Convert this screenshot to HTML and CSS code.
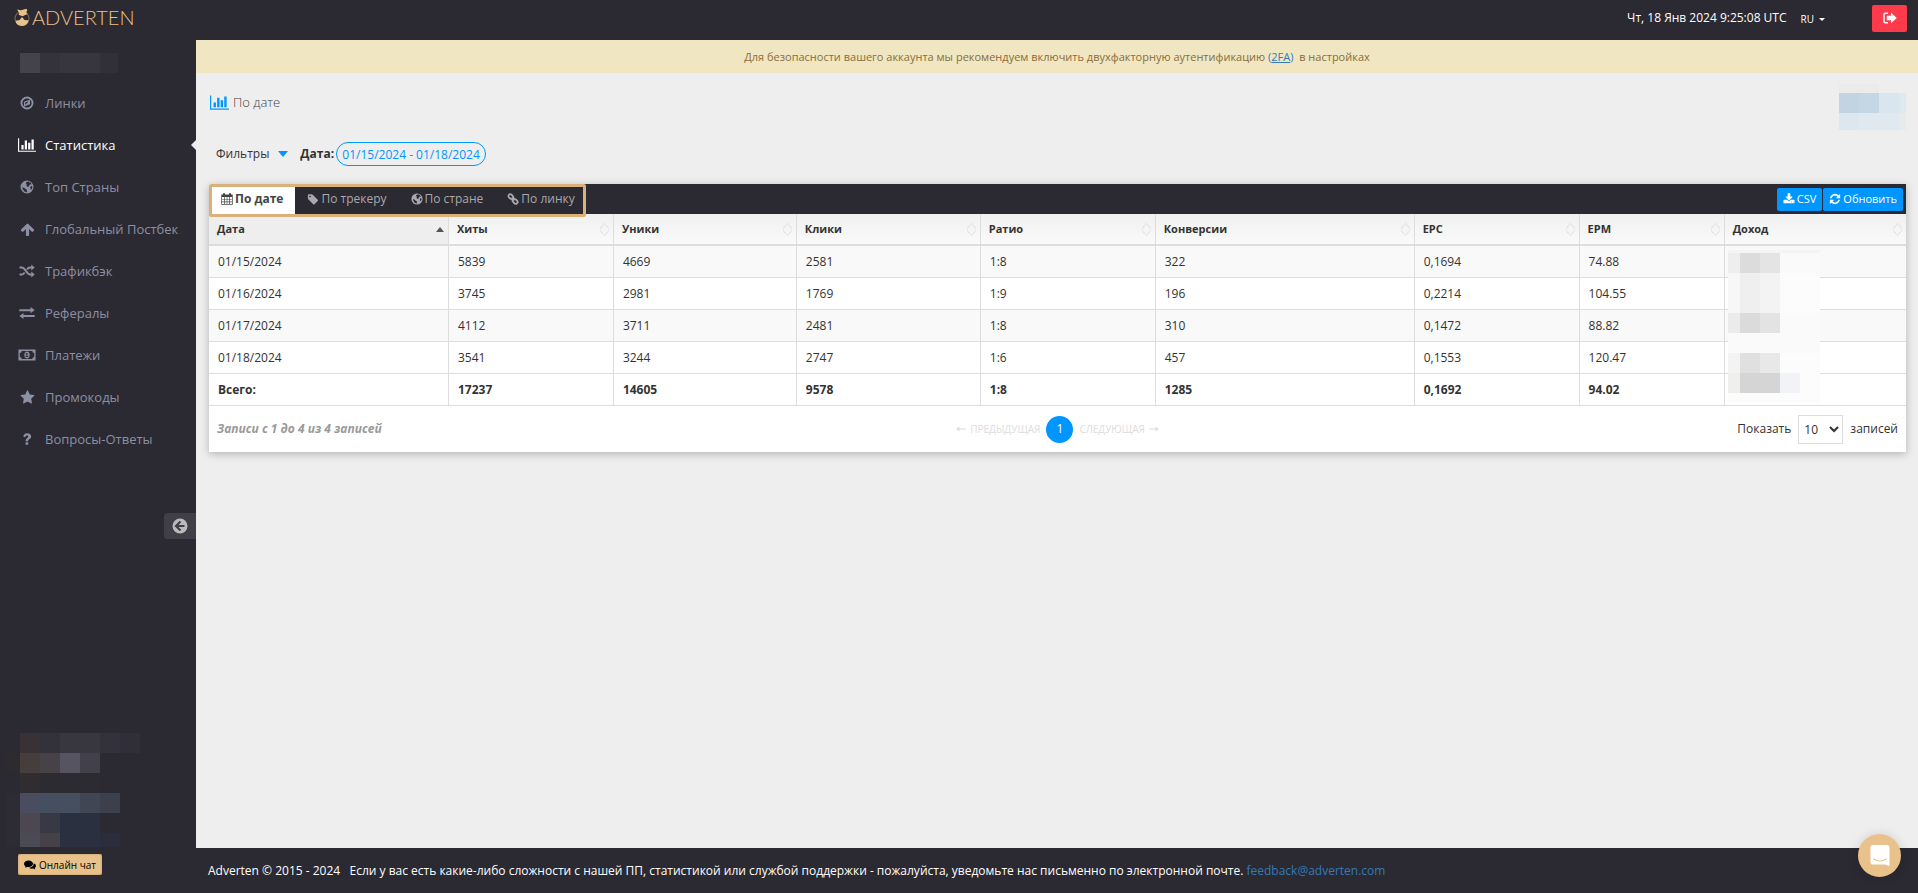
FILE: index.html
```html
<!DOCTYPE html>
<html lang="ru">
<head>
<meta charset="utf-8">
<title>Adverten — Статистика по дате</title>
<meta name="viewport" content="width=device-width, initial-scale=1">
<link rel="stylesheet" href="styles.css">
</head>
<body>
<svg class="defs" aria-hidden="true">
  <symbol id="i-chart" viewBox="0 0 2048 1792"><path d="M640 896v512h-256v-512h256zm384-512v1024h-256v-1024h256zm1024 1152v128h-2048v-1536h128v1408h1920zm-640-896v768h-256v-768h256zm384-384v1152h-256v-1152h256z"/></symbol>
  <symbol id="i-compass" viewBox="0 0 14 14"><path fill-rule="evenodd" d="M7 .5a6.500 6.500 0 1 0 0 13a6.500 6.500 0 0 0 0-13zm0 1.900a4.600 4.600 0 1 1 0 9.200a4.600 4.600 0 0 1 0-9.200zM10 3.400v4.900L4 10.600V5.700zM8.800 5.200L5.200 6.600v2.200zM7 6.100z"/></symbol>
  <symbol id="i-globe" viewBox="0 0 14 14"><path fill-rule="evenodd" d="M7 .5a6.500 6.500 0 1 0 0 13a6.500 6.500 0 0 0 0-13zM6.300 2.200l2.200-.6 2.300 1.300.9 1.500-1.300-.2-1.200 1-.3 1.300-1.500.3-1-1.100.4-1.500-1-.8zM11.400 6l.9.400-.1 1.600-1 1.700-.9-1.200.1-1.700zM2.300 7.200l1.800.5 1.700 1.500 1.200.5-.4 1.300.8 1.200C5 12.300 2.800 10.500 2.300 7.200z"/></symbol>
  <symbol id="i-up" viewBox="0 0 1792 1792"><path d="M1675 971q0 51-37 90l-75 75q-38 38-91 38-54 0-90-38l-294-293v704q0 52-37.500 84.500t-90.500 32.500h-128q-53 0-90.500-32.500t-37.500-84.500v-704l-294 293q-36 38-90 38t-90-38l-75-75q-38-38-38-90 0-53 38-91l651-651q35-37 90-37 54 0 91 37l651 651q37 39 37 91z"/></symbol>
  <symbol id="i-random" viewBox="0 0 16 14"><path fill="none" stroke="currentColor" stroke-width="2" d="M.5 3.500h2.300c3.700 0 4.700 7 8.200 7h2M.5 10.500h2.300c1.400 0 2.200-.9 2.900-2M8 5.500c.8-1.200 1.700-2 3-2h2"/><path d="M12.300 .5v6l3.400-3zM12.300 7.500v6l3.400-3z"/></symbol>
  <symbol id="i-exchange" viewBox="0 0 16 14"><path d="M.3 3.200h11.200V1l4.200 3.100-4.200 3.100V5.200H.3zM15.700 11H4.500v2L.3 10l4.200-3v2h11.200z"/></symbol>
  <symbol id="i-money" viewBox="0 0 18 14"><path fill-rule="evenodd" d="M.5 1.500h17v11H.500zM3.700 3a2 2 0 0 1-1.900 1.900v4.200A2 2 0 0 1 3.700 11h10.600a2 2 0 0 1 1.900-1.900V4.900A2 2 0 0 1 14.300 3zM9 3.500c1.600 0 2.700 1.600 2.700 3.500S10.600 10.500 9 10.500 6.300 8.900 6.300 7 7.400 3.500 9 3.500zM8.500 5l-1.100 1 .5.600.5-.4v2h-.8v.9h2.600v-.9h-.7V5z"/></symbol>
  <symbol id="i-star" viewBox="0 0 1792 1792"><path d="M1728 647q0 22-26 48l-363 354 86 500q1 7 1 20 0 21-10.500 35.500t-30.500 14.500q-19 0-40-12l-449-236-449 236q-22 12-40 12-21 0-31.500-14.500t-10.500-35.500q0-6 2-20l86-500-364-354q-25-27-25-48 0-37 56-46l502-73 225-455q19-41 49-41t49 41l225 455 502 73q56 9 56 46z"/></symbol>
  <symbol id="i-question" viewBox="0 0 14 14"><path d="M5.600 10.200h2.600v2.500H5.600zM3.200 4.200C3.900 2.300 5.200 1.300 7.200 1.300c2.300 0 4 1.400 4 3.300 0 2.500-3 2.800-3 4.200v.4H5.600v-.8C5.600 6.300 8.200 6 8.200 4.700c0-.7-.6-1.100-1.300-1.100-.8 0-1.200.5-1.800 1.900z"/></symbol>
  <symbol id="i-tag" viewBox="0 0 1792 1792"><path d="M576 448q0-53-37.500-90.500t-90.500-37.500-90.500 37.500-37.500 90.500 37.500 90.500 90.500 37.500 90.500-37.500 37.500-90.500zm1067 576q0 53-37 90l-491 492q-39 37-91 37-53 0-90-37l-715-716q-38-37-64.500-101t-26.500-117v-416q0-52 38-90t90-38h416q53 0 117 26.500t102 64.500l715 714q37 39 37 91z"/></symbol>
  <symbol id="i-calendar" viewBox="0 0 12 12"><path fill-rule="evenodd" d="M.3 1.500H2V.2h2v1.300h4V.2h2v1.300h1.700v10.300H.3zM1 4v2h2V4zm2.700 0v2h2V4zm2.600 0v2h2V4zM9 4v2h2V4zM1 6.600v2h2v-2zm2.700 0v2h2v-2zm2.600 0v2h2v-2zm2.700 0v2h2v-2zM1 9.200v1.900h2V9.200zm2.700 0v1.900h2V9.200zm2.600 0v1.900h2V9.200zm2.700 0v1.900h2V9.200z"/></symbol>
  <symbol id="i-link" viewBox="0 0 12 12"><g fill="none" stroke="currentColor" stroke-width="1.800"><rect x="1.200" y="1.900" width="5.400" height="3.600" rx="1.700" transform="rotate(45 3.900 3.700)"/><rect x="5.400" y="6.500" width="5.400" height="3.600" rx="1.700" transform="rotate(45 8.100 8.300)"/><path d="M4.600 4.600l2.800 2.800"/></g></symbol>
  <symbol id="i-download" viewBox="0 0 1792 1792"><path d="M1344 1344q0-26-19-45t-45-19-45 19-19 45 19 45 45 19 45-19 19-45zm256 0q0-26-19-45t-45-19-45 19-19 45 19 45 45 19 45-19 19-45zm128-224v320q0 40-28 68t-68 28h-1472q-40 0-68-28t-28-68v-320q0-40 28-68t68-28h465l135 136q58 56 136 56t136-56l136-136h464q40 0 68 28t28 68zm-325-569q17 41-14 70l-448 448q-18 19-45 19t-45-19l-448-448q-31-29-14-70 17-39 59-39h256v-448q0-26 19-45t45-19h256q26 0 45 19t19 45v448h256q42 0 59 39z"/></symbol>
  <symbol id="i-refresh" viewBox="0 0 1792 1792"><path d="M1639 1056q0 5-1 7-64 268-268 434.500t-478 166.500q-146 0-282.500-55t-243.500-157l-129 129q-19 19-45 19t-45-19-19-45v-448q0-26 19-45t45-19h448q26 0 45 19t19 45-19 45l-137 137q71 66 161 102t187 36q134 0 250-65t186-179q11-17 53-117 8-23 30-23h192q13 0 22.500 9.500t9.500 22.500zm25-800v448q0 26-19 45t-45 19h-448q-26 0-45-19t-19-45 19-45l138-138q-148-137-349-137-134 0-250 65t-186 179q-11 17-53 117-8 23-30 23h-199q-13 0-22.500-9.500t-9.500-22.500v-7q65-268 270-434.500t480-166.500q146 0 284 55.500t245 156.500l130-129q19-19 45-19t45 19 19 45z"/></symbol>
  <symbol id="i-sort" viewBox="0 0 9 13"><path fill="none" stroke="#ccc" stroke-dasharray="1.200 .8" d="M.5 5.500v-.5l4-4.300 4 4.300v.5M.5 7.500v.5l4 4.300 4-4.300v-.5"/></symbol>
  <symbol id="i-arrow" viewBox="0 0 10 6"><path d="M0 2.400h6.500V.5L10 3 6.500 5.500V3.600H0z"/></symbol>
</svg>

<header class="topbar">
  <a class="logo" href="#" aria-label="Adverten">
    <svg width="18" height="19" viewBox="0 0 18 19"><circle cx="9" cy="10.500" r="7" fill="none" stroke="#7a654e" stroke-width="1.200"/><path fill="#e9c28b" d="M4 1.500l4 .8L13.500.8l.8 1.400-1 2 1.200 1.800L9.500 8.300 5.500 6.800l.9-1.600zM9 9l2.500 3 3.800.3c0 3.200-2.600 5.700-6.300 5.700s-6.300-2.400-6.300-5.200l3.900-.8z"/></svg>
    <span class="logo-text">ADVERTEN</span>
  </a>
  <div class="topbar-right">
    <time class="clock">Чт, 18 Янв 2024 9:25:08 UTC</time>
    <button class="lang" type="button">RU <span class="caret"></span></button>
    <button class="logout" type="button" aria-label="Выход">
      <svg width="14" height="12" viewBox="0 0 14 12"><path fill="none" stroke="#fff" stroke-width="1.500" d="M5 1.300H2.500Q1 1.300 1 2.800v6.400q0 1.500 1.500 1.500H5"/><path fill="#fff" d="M3.800 3.700H8V.8L13.800 6 8 11.200V8.300H3.800z"/></svg>
    </button>
  </div>
</header>

<div class="shell">
  <aside class="sidebar">
    <svg class="user-mask" width="98" height="20" shape-rendering="crispEdges" aria-hidden="true"><path fill="#44424b" d="M0 0h20v20H0z"/><path fill="#34323b" d="M20 0h20v20H20z"/><path fill="#37353e" d="M40 0h40v20H40z"/><path fill="#312f38" d="M80 0h18v20H80z"/></svg>
    <nav class="menu">
      <a class="menu-item" href="#"><svg class="menu-icon" width="14" height="14"><use href="#i-compass"/></svg>Линки</a>
      <a class="menu-item is-active" href="#"><svg class="menu-icon" width="18" height="16"><use href="#i-chart"/></svg>Статистика</a>
      <a class="menu-item" href="#"><svg class="menu-icon" width="14" height="14"><use href="#i-globe"/></svg>Топ Страны</a>
      <a class="menu-item" href="#"><svg class="menu-icon" width="15" height="15"><use href="#i-up"/></svg>Глобальный Постбек</a>
      <a class="menu-item" href="#"><svg class="menu-icon" width="16" height="14"><use href="#i-random"/></svg>Трафикбэк</a>
      <a class="menu-item" href="#"><svg class="menu-icon" width="16" height="14"><use href="#i-exchange"/></svg>Рефералы</a>
      <a class="menu-item" href="#"><svg class="menu-icon" width="18" height="14"><use href="#i-money"/></svg>Платежи</a>
      <a class="menu-item" href="#"><svg class="menu-icon" width="15" height="15"><use href="#i-star"/></svg>Промокоды</a>
      <a class="menu-item" href="#"><svg class="menu-icon" width="14" height="14"><use href="#i-question"/></svg>Вопросы-Ответы</a>
    </nav>
    <button class="collapse" type="button" aria-label="Свернуть меню">
      <svg width="16" height="16" viewBox="0 0 16 16"><circle cx="8" cy="8" r="7.500" fill="#bbb"/><path fill="none" stroke="#403e47" stroke-width="2.200" d="M8.500 3.500L4 8l4.500 4.500M4 8h8.500"/></svg>
    </button>
    <svg class="manager-mask" width="134" height="114" shape-rendering="crispEdges" aria-hidden="true">
      <path fill="#393135" d="M14 0h20v20H14z"/><path fill="#33313a" d="M34 0h20v20H34z"/><path fill="#38363f" d="M54 0h40v20H54z"/><path fill="#33313b" d="M94 0h20v20H94z"/><path fill="#302e38" d="M114 0h20v20h-20z"/>
      <path fill="#2e2b30" d="M0 20h14v20H0z"/><path fill="#463e3d" d="M14 20h20v20H14z"/><path fill="#474148" d="M34 20h20v20H34z"/><path fill="#565460" d="M54 20h20v20H54z"/><path fill="#42404b" d="M74 20h20v20H74z"/>
      <path fill="#302d31" d="M14 40h20v20H14z"/><path fill="#2d2b32" d="M34 40h60v20H34z"/>
      <path fill="#2d2b34" d="M0 60h14v54H0z"/><path fill="#4a4c5f" d="M14 60h20v20H14z"/><path fill="#454f5f" d="M34 60h40v20H34z"/><path fill="#404653" d="M74 60h20v20H74z"/><path fill="#3c404c" d="M94 60h20v20H94z"/>
      <path fill="#4c4750" d="M14 80h20v20H14z"/><path fill="#373944" d="M34 80h20v20H34z"/><path fill="#2b3040" d="M54 80h40v34H54z"/>
      <path fill="#4b4b55" d="M14 100h20v14H14z"/><path fill="#464148" d="M34 100h20v14H34z"/><path fill="#2b2d3c" d="M94 100h20v14H94z"/>
    </svg>
    <button class="chat" type="button">
      <svg width="12" height="10" viewBox="0 0 12 10"><path d="M4.500.5C2 .5 0 1.900 0 3.800c0 1 .6 1.900 1.500 2.500L1 7.800l2-.9c3 .7 6-.9 6-3.100C9 1.900 7 .5 4.500.5z"/><path d="M9.600 3.300C10 5.600 7.900 7.600 5 7.800c1 .8 2.600 1.200 4.200.8l2 .9-.5-1.400c2-1.400 1.500-4-1.100-4.800z"/></svg>
      Онлайн чат
    </button>
  </aside>

  <div class="page">
    <div class="alert">Для безопасности вашего аккаунта мы рекомендуем включить двухфакторную аутентификацию <a href="#">(<u>2FA</u>)</a> &nbsp;в настройках</div>

    <main class="content">
      <div class="title-row">
        <h1 class="title"><svg width="19" height="17"><use href="#i-chart"/></svg>По дате</h1>
        <svg class="balance-mask" width="67" height="46" shape-rendering="crispEdges" aria-hidden="true"><path fill="#ebebeb" d="M0 0h40v9H0z"/><path fill="#c2d4e2" d="M0 9h20v20H0z"/><path fill="#c5d7e5" d="M20 9h20v20H20z"/><path fill="#d9e5ef" d="M40 9h20v20H40z"/><path fill="#dfe9f0" d="M60 9h7v20h-7z"/><path fill="#dde7f0" d="M0 29h20v17H0z"/><path fill="#e0e8f0" d="M20 29h40v17H20z"/><path fill="#e6ebee" d="M60 29h7v17h-7z"/></svg>
      </div>

      <div class="filters">
        <button class="filter-toggle" type="button">Фильтры <span class="filter-arrow"></span></button>
        <label class="date-label" for="range">Дата:</label>
        <input class="date-range" id="range" type="text" value="01/15/2024 - 01/18/2024">
      </div>

      <section class="card">
        <div class="toolbar">
          <nav class="tabs">
            <a class="tab is-active" href="#"><svg width="12" height="12"><use href="#i-calendar"/></svg>По дате</a>
            <a class="tab" href="#"><svg width="12" height="13"><use href="#i-tag"/></svg>По трекеру</a>
            <a class="tab" href="#"><svg width="12" height="12"><use href="#i-globe"/></svg>По стране</a>
            <a class="tab" href="#"><svg width="12" height="12"><use href="#i-link"/></svg>По линку</a>
          </nav>
          <div class="actions">
            <button class="btn" type="button"><svg width="12" height="12"><use href="#i-download"/></svg>CSV</button>
            <button class="btn" type="button"><svg width="12" height="12"><use href="#i-refresh"/></svg>Обновить</button>
          </div>
        </div>

        <div class="table-wrap">
          <table class="stats">
            <colgroup><col class="c-date"><col class="c-hits"><col class="c-uniq"><col class="c-clicks"><col class="c-ratio"><col class="c-conv"><col class="c-epc"><col class="c-epm"><col class="c-income"></colgroup>
            <thead>
              <tr>
                <th class="sorted" scope="col"><div class="th">Дата<span class="sort-up"></span></div></th>
                <th scope="col"><div class="th">Хиты<svg width="9" height="13"><use href="#i-sort"/></svg></div></th>
                <th scope="col"><div class="th">Уники<svg width="9" height="13"><use href="#i-sort"/></svg></div></th>
                <th scope="col"><div class="th">Клики<svg width="9" height="13"><use href="#i-sort"/></svg></div></th>
                <th scope="col"><div class="th">Ратио<svg width="9" height="13"><use href="#i-sort"/></svg></div></th>
                <th scope="col"><div class="th">Конверсии<svg width="9" height="13"><use href="#i-sort"/></svg></div></th>
                <th scope="col"><div class="th">EPC<svg width="9" height="13"><use href="#i-sort"/></svg></div></th>
                <th scope="col"><div class="th">EPM<svg width="9" height="13"><use href="#i-sort"/></svg></div></th>
                <th scope="col"><div class="th">Доход<svg width="9" height="13"><use href="#i-sort"/></svg></div></th>
              </tr>
            </thead>
            <tbody>
              <tr><td>01/15/2024</td><td>5839</td><td>4669</td><td>2581</td><td>1:8</td><td>322</td><td>0,1694</td><td>74.88</td><td></td></tr>
              <tr><td>01/16/2024</td><td>3745</td><td>2981</td><td>1769</td><td>1:9</td><td>196</td><td>0,2214</td><td>104.55</td><td></td></tr>
              <tr><td>01/17/2024</td><td>4112</td><td>3711</td><td>2481</td><td>1:8</td><td>310</td><td>0,1472</td><td>88.82</td><td></td></tr>
              <tr><td>01/18/2024</td><td>3541</td><td>3244</td><td>2747</td><td>1:6</td><td>457</td><td>0,1553</td><td>120.47</td><td></td></tr>
            </tbody>
            <tfoot>
              <tr><td>Всего:</td><td>17237</td><td>14605</td><td>9578</td><td>1:8</td><td>1285</td><td>0,1692</td><td>94.02</td><td></td></tr>
            </tfoot>
          </table>
          <svg class="income-mask" width="92" height="153" shape-rendering="crispEdges" aria-hidden="true">
            <path fill="#fcfcfc" d="M0 0h92v153H0z"/><path fill="#f4f4f4" d="M0 0h92v3H0z"/><path fill="#fafafa" d="M52 3h40v20H52zM52 63h40v20H52zM0 83h92v20H0z"/>
            <path fill="#eee" d="M0 3h12v20H0z"/><path fill="#dcdcdc" d="M12 3h20v20H12z"/><path fill="#e4e4e4" d="M32 3h20v20H32z"/>
            <path fill="#f7f7f7" d="M0 23h12v40H0z"/><path fill="#efefef" d="M12 23h20v40H12z"/><path fill="#f3f3f3" d="M32 23h20v40H32z"/>
            <path fill="#ebebeb" d="M0 63h12v20H0z"/><path fill="#dbdbdb" d="M12 63h20v20H12z"/><path fill="#e3e3e3" d="M32 63h20v20H32z"/>
            <path fill="#f3f3f3" d="M0 103h12v20H0z"/><path fill="#e0e0e0" d="M12 103h20v20H12z"/><path fill="#e8e8e8" d="M32 103h20v20H32z"/>
            <path fill="#efefed" d="M0 123h12v20H0z"/><path fill="#d5d5d5" d="M12 123h40v20H12z"/><path fill="#f2f3f6" d="M52 123h20v20H52z"/>
          </svg>
        </div>

        <div class="table-footer">
          <div class="info">Записи с 1 до 4 из 4 записей</div>
          <nav class="pager">
            <button class="pager-step" type="button" disabled><svg class="flip" width="10" height="6"><use href="#i-arrow"/></svg>Предыдущая</button>
            <button class="pager-page" type="button">1</button>
            <button class="pager-step" type="button" disabled>Следующая<svg width="10" height="6"><use href="#i-arrow"/></svg></button>
          </nav>
          <label class="length">Показать
            <select class="length-select"><option>10</option><option>25</option><option>50</option></select>
            записей</label>
        </div>
      </section>
    </main>

    <footer class="footer">Adverten © 2015 - 2024 &nbsp; Если у вас есть какие-либо сложности с нашей ПП, статистикой или службой поддержки - пожалуйста, уведомьте нас письменно по электронной почте. <a href="#">feedback@adverten.com</a></footer>
  </div>
</div>

<button class="messenger" type="button" aria-label="Открыть чат">
  <svg width="20" height="21" viewBox="0 0 20 21"><path fill="#fff" d="M3 0h14q2.500 0 2.500 2.500V21l-4.500-1.500H3Q.5 19.500.5 17V2.500Q.5 0 3 0z"/><path fill="none" stroke="#e9c28b" stroke-width="1.200" stroke-linecap="round" d="M3.800 14q6.200 4 12.400 0"/></svg>
</button>
</body>
</html>
```

FILE: styles.css
```css
* { box-sizing: border-box; }

body {
  margin: 0;
  min-height: 100vh;
  display: flex;
  flex-direction: column;
  background: #2b2932;
  color: #333;
  font-family: "Open Sans", "Noto Sans", sans-serif;
  font-size: 12px;
  line-height: 18px;
}

svg { fill: currentColor; flex: none; }
button, input, select { font: inherit; color: inherit; }
button { border: 0; padding: 0; background: none; cursor: pointer; }
a { color: #337ab7; text-decoration: none; }

.defs { position: absolute; width: 0; height: 0; }

/* Top bar */
.topbar {
  display: flex;
  justify-content: space-between;
  height: 40px;
  padding: 0 11px 0 13px;
  color: #fff;
}
.logo {
  display: flex;
  gap: 1px;
  align-items: center;
  height: 34px;
  color: #e9c28b;
}
.logo-text { font-family: Lato, sans-serif; font-weight: 300; font-size: 20px; }
.topbar-right { display: flex; align-items: center; height: 36px; }
.lang {
  display: flex;
  align-items: center;
  gap: 5px;
  margin: 2px 47px 0 14px;
  font-size: 10px;
}
.caret { border: 3px solid transparent; border-top-color: #fff; border-bottom: 0; }
.logout {
  display: grid;
  place-items: center;
  width: 35px;
  height: 27px;
  border-radius: 2px;
  background: #ff3b4b;
}

/* Sidebar */
.shell { flex: 1; display: flex; }
.sidebar {
  flex: none;
  width: 196px;
  display: flex;
  flex-direction: column;
  align-items: flex-start;
}
.user-mask { margin: 13px 0 9px 20px; }
.menu { width: 100%; }
.menu-item {
  position: relative;
  display: grid;
  grid-template-columns: 18px 1fr;
  column-gap: 9px;
  align-items: center;
  height: 42px;
  padding-left: 18px;
  color: #8d8fa3;
  font-size: 13px;
}
.menu-icon { justify-self: center; }
.menu-item.is-active { color: #fff; }
.menu-item.is-active::after {
  content: "";
  position: absolute;
  right: 0;
  top: 16px;
  border: 5px solid transparent;
  border-right-color: #e6eef5;
  border-left: 0;
}
.collapse {
  display: grid;
  place-items: center;
  align-self: flex-end;
  width: 32px;
  height: 26px;
  margin-top: 53px;
  border-radius: 4px 0 0 4px;
  background: #403e47;
}
.manager-mask { margin: auto 0 7px 6px; }
.chat {
  display: flex;
  align-items: center;
  gap: 3px;
  height: 21px;
  margin: 0 0 18px 18px;
  padding: 0 6px;
  border-radius: 2px;
  background: #e9c28b;
  box-shadow: inset 0 0 2px #a98a5e;
  color: #000;
  font-size: 10px;
}

/* Page */
.page {
  flex: 1;
  min-width: 0;
  display: flex;
  flex-direction: column;
  background: #eee;
}
.alert {
  padding: 8px 16px 7px;
  background: #f0e6c1;
  color: #8a6d3b;
  font-size: 11px;
  text-align: center;
}
.content { flex: 1; padding: 11px 12px 16px 13px; }
.title-row { display: flex; justify-content: space-between; height: 46px; }
.title {
  display: flex;
  align-items: center;
  gap: 4px;
  margin: 0;
  height: 36px;
  padding-left: 1px;
  color: #444;
  font-size: 13px;
  font-weight: 300;
}
.title svg { color: #0096ff; }
.filters {
  display: flex;
  align-items: center;
  margin: 12px 0 18px 7px;
}
.filter-toggle { display: flex; align-items: center; gap: 9px; }
.filter-arrow { border: 5px solid transparent; border-top: 6px solid #0096ff; border-bottom: 0; }
.date-label { margin: 0 2px 0 12px; font-weight: 700; }
.date-range {
  width: 150px;
  height: 24px;
  padding: 0;
  border: 1px solid #0096ff;
  border-radius: 12px;
  background: transparent;
  color: #0096ff;
  text-align: center;
}

/* Card */
.card { background: #fff; box-shadow: 0 2px 8px rgba(0, 0, 0, .25); }
.toolbar {
  display: flex;
  justify-content: space-between;
  height: 30px;
  background: #2b2932;
}
.tabs { position: relative; z-index: 1; display: flex; }
.tabs::after {
  content: "";
  position: absolute;
  inset: 0 1px -3px 0;
  border: 3px solid #d9b179;
  border-radius: 2px;
  pointer-events: none;
}
.tab {
  display: flex;
  align-items: center;
  gap: 2px;
  padding: 0 12px;
  color: #a9a8ad;
}
.tab.is-active { background: #fff; color: #444; font-weight: 700; }
.actions { display: flex; align-items: center; gap: 1px; padding-right: 3px; }
.btn {
  display: flex;
  align-items: center;
  gap: 2px;
  height: 23px;
  padding: 0 6px;
  border-radius: 2px;
  background: #0096ff;
  color: #fff;
  font-size: 11px;
}

/* Table */
.table-wrap { position: relative; }
.stats { width: 100%; table-layout: fixed; border-collapse: separate; border-spacing: 0; }
.c-date { width: 14.14%; }
.c-hits, .c-epc { width: 9.72%; }
.c-uniq { width: 10.78%; }
.c-clicks { width: 10.84%; }
.c-ratio { width: 10.31%; }
.c-conv { width: 15.26%; }
.c-epm { width: 8.55%; }
.stats th,
.stats td { border-right: 1px solid #ddd; text-align: left; }
.stats th:last-child,
.stats td:last-child { border-right: 0; }
.stats th {
  height: 32px;
  padding: 0 4px 0 8px;
  border-bottom: 2px solid #ddd;
  background: linear-gradient(#f0f0f0, #fafafa);
  font-size: 11px;
  font-weight: 700;
}
.stats th.sorted { background: #eee; }
.th { display: flex; align-items: center; justify-content: space-between; }
.sort-up { border: 4px solid transparent; border-bottom: 5px solid #555; border-top: 0; }
.stats td { height: 32px; padding: 0 8px 0 9px; border-bottom: 1px solid #ddd; }
.stats tbody tr:nth-child(odd) td { background: #f9f9f9; }
.stats tfoot td { font-weight: 700; }
.income-mask { position: absolute; right: 86px; top: 36px; }

.table-footer {
  display: grid;
  grid-template-columns: 1fr auto 1fr;
  align-items: center;
  height: 46px;
  padding: 0 8px;
}
.info { color: #999; font-style: italic; font-weight: 700; }
.pager { display: flex; align-items: center; gap: 6px; }
.pager-step {
  display: flex;
  align-items: center;
  gap: 4px;
  color: #ddd;
  font-size: 10px;
  text-transform: uppercase;
}
.flip { transform: scaleX(-1); }
.pager-page {
  width: 27px;
  height: 27px;
  border-radius: 50%;
  background: #0096ff;
  color: #fff;
}
.length { display: flex; align-items: center; justify-self: end; gap: 7px; }
.length-select {
  width: 45px;
  height: 29px;
  padding: 0 0 0 1px;
  border: 1px solid #ddd;
  background: #fff;
}

.footer {
  height: 45px;
  padding: 14px 12px 13px;
  background: #2b2932;
  color: #fff;
}

.messenger {
  position: fixed;
  right: 17px;
  bottom: 16px;
  display: grid;
  place-items: center;
  width: 43px;
  height: 43px;
  border-radius: 50%;
  background: #e9c28b;
  box-shadow: 0 1px 12px rgba(0, 0, 0, .15);
}
```
